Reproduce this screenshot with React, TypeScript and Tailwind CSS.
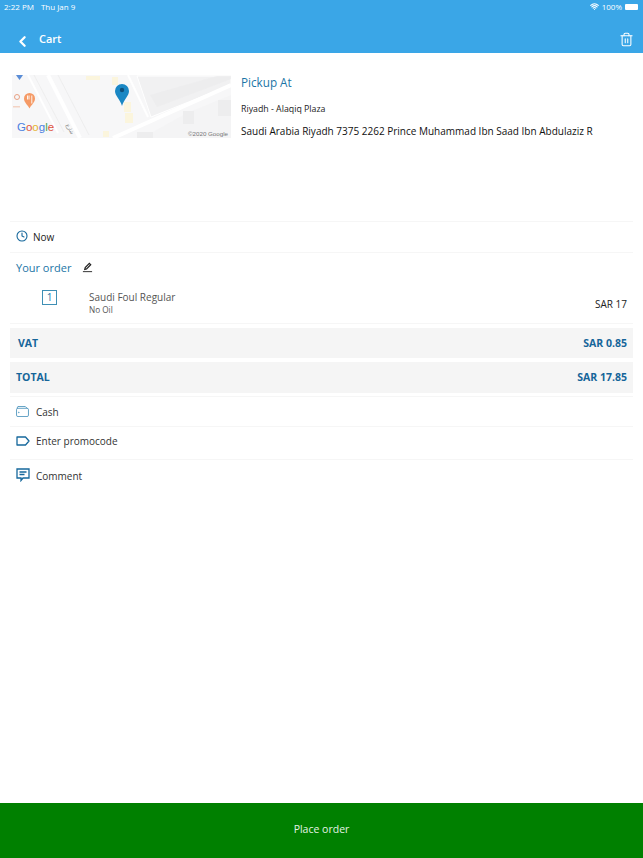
import { ChevronLeft, Trash2, Clock, Wifi } from "lucide-react";

function MapPreview() {
    return (
        <svg viewBox="0 0 219 63" className="w-[219px] h-[63px] shrink-0 block">
            <rect width="219" height="63" fill="#f7f7f8" />
            <polygon points="125,1 219,1 219,10 139,42" fill="#f1f1f2" stroke="#ffffff" strokeWidth="1" />
            <polygon points="138,20 205,1 219,1 219,4 145,32" fill="#ebebec" opacity="0.7" />
            <line x1="16" y1="0" x2="46" y2="58" stroke="#ffffff" strokeWidth="2" />
            <line x1="22" y1="0" x2="52" y2="57" stroke="#e9e9ea" strokeWidth="0.7" />
            <line x1="36" y1="0" x2="68" y2="63" stroke="#ffffff" strokeWidth="4" />
            <line x1="46" y1="0" x2="77" y2="60" stroke="#e9e9ea" strokeWidth="0.7" />
            <line x1="116" y1="0" x2="136" y2="42" stroke="#ffffff" strokeWidth="2" />
            <line x1="101" y1="63" x2="219" y2="10" stroke="#ffffff" strokeWidth="4" />
            <polygon points="175,38 219,20 219,63 130,63" fill="#f4f4f5" />
            <rect x="171" y="36" width="11" height="13" fill="#ededee" />
            <rect x="206" y="25" width="13" height="16" fill="#ededee" />
            <rect x="125" y="57" width="16" height="6" fill="#ededee" />
            <rect x="74" y="1" width="14" height="4" fill="#fbf5dd" />
            <rect x="100" y="2" width="6" height="8" fill="#fbf5dd" />
            <rect x="112" y="27" width="7" height="10" fill="#fbf5dd" />
            <rect x="113" y="38" width="8" height="10" fill="#fbf5dd" />
            <rect x="91" y="56" width="6" height="6" fill="#fbf5dd" />
            <polygon points="4,0 11,0 7.500,5" fill="#5a8dd6" />
            <circle cx="5" cy="22" r="2.500" fill="none" stroke="#e8a184" strokeWidth="1" />
            <rect x="1" y="31" width="7" height="1.500" fill="#f3d3c4" />
            <path d="M12 23.500a5.500 5.500 0 0 1 11 0c0 4 -3.500 6 -5.500 10c-2 -4 -5.500 -6 -5.500 -10z" fill="#f59a66" />
            <path d="M15.500 20.500v4M17 20.500v4M19.800 20.500v8" stroke="#ffffff" strokeWidth="0.900" />
            <path d="M110 31c-2 -7 -7 -10 -7 -15a7 7 0 0 1 14 0c0 5 -5 8 -7 15z" fill="#1a87c4" />
            <circle cx="110" cy="15" r="2.200" fill="#0d4f7c" />
            <text x="5" y="56" fontFamily="'Liberation Sans', sans-serif" fontSize="11.500">
                <tspan fill="#4a80e0">G</tspan>
                <tspan fill="#e0533f">o</tspan>
                <tspan fill="#e6b32e">o</tspan>
                <tspan fill="#4a80e0">g</tspan>
                <tspan fill="#45a555">l</tspan>
                <tspan fill="#e0533f">e</tspan>
            </text>
            <text x="54" y="50" fontFamily="'DejaVu Sans', sans-serif" fontSize="5" fill="#777777" transform="rotate(62 54 50)">شارع</text>
            <text x="176" y="61" fontFamily="'Liberation Sans', sans-serif" fontSize="6.200" fill="#777777">©2020 Google</text>
        </svg>
    );
}

export default function App() {
    return (
        <div className="relative w-[643px] h-[858px] bg-white flex flex-col font-['Open_Sans',sans-serif] overflow-hidden">
            <div className="h-[53px] bg-[#3aa6e7] shrink-0 flex flex-col text-white">
                <div className="h-[13px] flex items-center justify-between pl-[4px] pr-[5px] text-[8px]">
                    <div className="flex gap-[7px]">
                        <span>2:22 PM</span>
                        <span>Thu Jan 9</span>
                    </div>
                    <div className="flex items-center gap-[3px]">
                        <Wifi size={9} strokeWidth={3} />
                        <span>100%</span>
                        <div className="w-[13px] h-[6px] bg-white rounded-[1px]" />
                    </div>
                </div>
                <div className="flex-1 flex items-center justify-between pl-[14px] pr-[9px] pt-[12px]">
                    <div className="flex items-center gap-[8px]">
                        <ChevronLeft size={17} strokeWidth={3.2} className="mt-[4px]" />
                        <span className="text-[11px] font-semibold">Cart</span>
                    </div>
                    <Trash2 size={15} strokeWidth={1.7} />
                </div>
            </div>

            <div className="flex-1 flex flex-col">
                <div className="flex pl-[12px] pt-[22px] h-[168px] gap-[10px]">
                    <MapPreview />
                    <div className="flex flex-col">
                        <span className="text-[11.7px] text-[#1b75a6] leading-[16px] -mt-[1px]">Pickup At</span>
                        <span className="text-[8.8px] text-[#222222] leading-[12px] mt-[13px]">Riyadh - Alaqiq Plaza</span>
                        <span className="text-[10px] text-[#111111] leading-[14px] mt-[9px] whitespace-nowrap">Saudi Arabia Riyadh 7375 2262 Prince Muhammad Ibn Saad Ibn Abdulaziz R</span>
                    </div>
                </div>

                <div className="mx-[10px] border-t border-[#f6f6f6] h-[31px] flex items-center pl-[6px] gap-[5px]">
                    <Clock size={12} strokeWidth={2.2} className="text-[#16689c] mb-[3px]" />
                    <span className="text-[10px] text-[#222222]">Now</span>
                </div>

                <div className="mx-[10px] border-t border-[#f6f6f6] h-[32px] flex items-center pl-[6px] gap-[11px]">
                    <span className="text-[11px] text-[#1b75a6]">Your order</span>
                    <svg viewBox="0 0 12 12" className="w-[11px] h-[11px] mb-[2px]">
                        <path d="M3 8l0.500 -2l4.500 -4.500l1.500 1.500l-4.500 4.500z" fill="none" stroke="#222222" strokeWidth="1.300" />
                        <path d="M1 10.500h10" stroke="#222222" strokeWidth="1" />
                    </svg>
                </div>

                <div className="mx-[10px] h-[40px] border-b border-[#f6f6f6] flex items-start justify-between pr-[6px]">
                    <div className="flex">
                        <div className="ml-[32px] mt-[6px] w-[15px] h-[15px] border border-[#3f8fb5] flex items-center justify-center text-[10px] text-[#1b75a6]">1</div>
                        <div className="ml-[32px] flex flex-col">
                            <span className="text-[10px] text-[#555555] leading-[14px] mt-[6px]">Saudi Foul Regular</span>
                            <span className="text-[8.2px] text-[#555555] leading-[11px]">No Oil</span>
                        </div>
                    </div>
                    <span className="text-[10px] text-[#222222] mt-[13px]">SAR 17</span>
                </div>

                <div className="mx-[10px] mt-[4px] h-[30px] bg-[#f5f5f5] flex items-center justify-between pl-[8px] pr-[6px] pt-[1px] text-[10.5px] font-bold text-[#15659a]">
                    <span>VAT</span>
                    <span>SAR 0.85</span>
                </div>
                <div className="mx-[10px] mt-[4px] h-[31px] bg-[#f5f5f5] flex items-center justify-between pl-[6px] pr-[6px] pt-[1px] text-[10.5px] font-bold text-[#15659a]">
                    <span>TOTAL</span>
                    <span>SAR 17.85</span>
                </div>

                <div className="mx-[10px] mt-[3px] h-[31px] border-t border-b border-[#f6f6f6] flex items-center pl-[6px] pt-[1px] gap-[7px]">
                    <svg viewBox="0 0 14 12" className="w-[13px] h-[11px] mb-[2px]" fill="none" stroke="#2a80b0" strokeWidth="0.800">
                        <rect x="0.500" y="2.500" width="13" height="9" rx="1.500" />
                        <path d="M1 2.500l1 -2h8l2 2" />
                        <circle cx="3" cy="7" r="0.400" />
                    </svg>
                    <span className="text-[10px] text-[#333333]">Cash</span>
                </div>

                <div className="mx-[10px] h-[33px] border-b border-[#f6f6f6] flex items-center pl-[6px] pb-[4px] gap-[6px]">
                    <svg viewBox="0 0 14 10" className="w-[14px] h-[10px]" fill="none" stroke="#16689c" strokeWidth="1.300">
                        <path d="M1 1h8.500l3.500 4l-3.500 4h-8.500z" strokeLinejoin="round" />
                    </svg>
                    <span className="text-[10px] text-[#333333]">Enter promocode</span>
                </div>

                <div className="mx-[10px] h-[33px] flex items-center pl-[6px] gap-[6px]">
                    <svg viewBox="0 0 14 14" className="w-[14px] h-[14px] mb-[3px]" fill="none" stroke="#16689c" strokeWidth="1.300">
                        <path d="M1 1h12v9h-6l-2 2.500v-2.500h-4z" />
                        <path d="M3.500 4h7M3.500 6.500h5" />
                    </svg>
                    <span className="text-[10px] text-[#333333]">Comment</span>
                </div>
            </div>

            <div className="h-[55px] bg-[#008000] shrink-0 flex items-center justify-center pb-[2px] text-[10.5px] text-[#e4f2e4]">Place order</div>
        </div>
    );
}
